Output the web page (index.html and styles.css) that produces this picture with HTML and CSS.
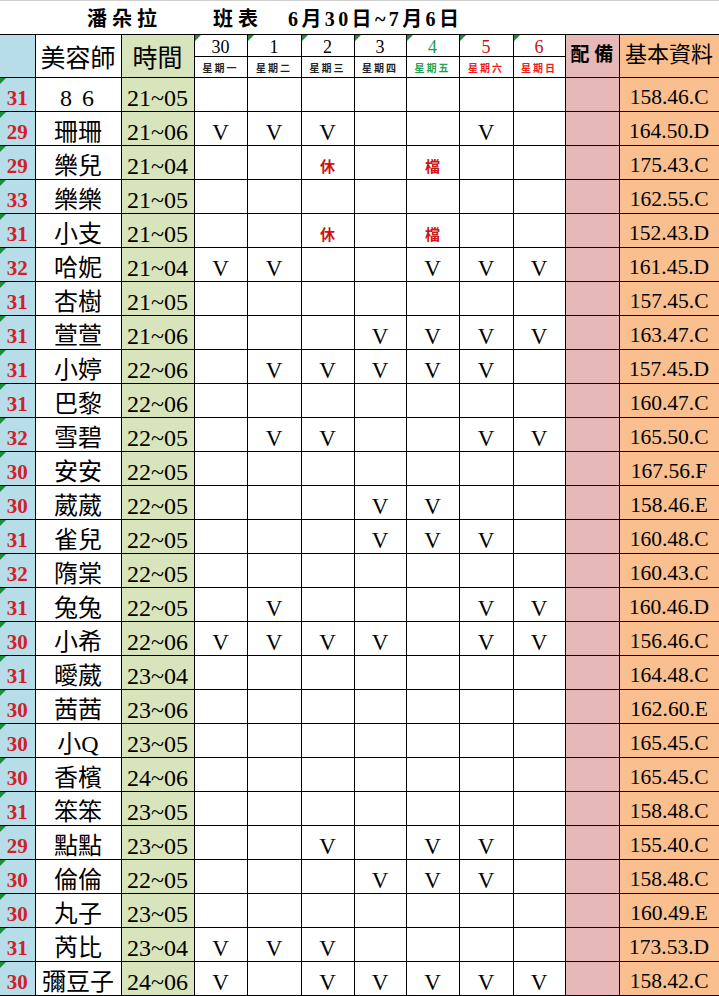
FILE: index.html
```html
<!DOCTYPE html>
<html lang="zh-Hant">
<head>
<meta charset="utf-8">
<title>潘朵拉 班表</title>
<link rel="stylesheet" href="styles.css">
</head>
<body>
<table class="sheet">
<colgroup>
<col class="c-n"><col class="c-nm"><col class="c-t">
<col class="c-d1"><col class="c-d2"><col class="c-d1"><col class="c-d3"><col class="c-d1"><col class="c-d2"><col class="c-d3">
<col class="c-p"><col class="c-o">
</colgroup>
<tr class="title">
<td colspan="12"><div class="title-line"><span class="t1">潘朵拉</span><span class="t2">班表</span><span class="t3">6月30日~7月6日</span></div></td>
</tr>
<tr class="h1">
<td class="n hn" rowspan="2"></td>
<td class="nm hh" rowspan="2">美容師</td>
<td class="t hh" rowspan="2">時間</td>
<td class="dn tri">30</td><td class="dn tri">1</td><td class="dn tri">2</td><td class="dn tri">3</td>
<td class="dn tri g">4</td><td class="dn tri r">5</td><td class="dn tri r">6</td>
<td class="p hp" rowspan="2">配 備</td>
<td class="o ho" rowspan="2">基本資料</td>
</tr>
<tr class="h2">
<td class="wd">星期一</td><td class="wd">星期二</td><td class="wd">星期三</td><td class="wd">星期四</td>
<td class="wd g">星期五</td><td class="wd r">星期六</td><td class="wd r">星期日</td>
</tr>
<tr class="row"><td class="n tri">31</td><td class="nm sp">8 6</td><td class="t">21~05</td><td></td><td></td><td></td><td></td><td></td><td></td><td></td><td class="p"></td><td class="o">158.46.C</td></tr>
<tr class="row"><td class="n tri">29</td><td class="nm">珊珊</td><td class="t">21~06</td><td>V</td><td>V</td><td>V</td><td></td><td></td><td>V</td><td></td><td class="p"></td><td class="o">164.50.D</td></tr>
<tr class="row"><td class="n tri">29</td><td class="nm">樂兒</td><td class="t">21~04</td><td></td><td></td><td class="off">休</td><td></td><td class="off">檔</td><td></td><td></td><td class="p"></td><td class="o">175.43.C</td></tr>
<tr class="row"><td class="n tri">33</td><td class="nm">樂樂</td><td class="t">21~05</td><td></td><td></td><td></td><td></td><td></td><td></td><td></td><td class="p"></td><td class="o">162.55.C</td></tr>
<tr class="row"><td class="n tri">31</td><td class="nm">小支</td><td class="t">21~05</td><td></td><td></td><td class="off">休</td><td></td><td class="off">檔</td><td></td><td></td><td class="p"></td><td class="o">152.43.D</td></tr>
<tr class="row"><td class="n tri">32</td><td class="nm">哈妮</td><td class="t">21~04</td><td>V</td><td>V</td><td></td><td></td><td>V</td><td>V</td><td>V</td><td class="p"></td><td class="o">161.45.D</td></tr>
<tr class="row"><td class="n tri">31</td><td class="nm">杏樹</td><td class="t">21~05</td><td></td><td></td><td></td><td></td><td></td><td></td><td></td><td class="p"></td><td class="o">157.45.C</td></tr>
<tr class="row"><td class="n tri">31</td><td class="nm">萱萱</td><td class="t">21~06</td><td></td><td></td><td></td><td>V</td><td>V</td><td>V</td><td>V</td><td class="p"></td><td class="o">163.47.C</td></tr>
<tr class="row"><td class="n tri">31</td><td class="nm">小婷</td><td class="t">22~06</td><td></td><td>V</td><td>V</td><td>V</td><td>V</td><td>V</td><td></td><td class="p"></td><td class="o">157.45.D</td></tr>
<tr class="row"><td class="n tri">31</td><td class="nm">巴黎</td><td class="t">22~06</td><td></td><td></td><td></td><td></td><td></td><td></td><td></td><td class="p"></td><td class="o">160.47.C</td></tr>
<tr class="row"><td class="n tri">32</td><td class="nm">雪碧</td><td class="t">22~05</td><td></td><td>V</td><td>V</td><td></td><td></td><td>V</td><td>V</td><td class="p"></td><td class="o">165.50.C</td></tr>
<tr class="row"><td class="n tri">30</td><td class="nm">安安</td><td class="t">22~05</td><td></td><td></td><td></td><td></td><td></td><td></td><td></td><td class="p"></td><td class="o">167.56.F</td></tr>
<tr class="row"><td class="n tri">30</td><td class="nm">葳葳</td><td class="t">22~05</td><td></td><td></td><td></td><td>V</td><td>V</td><td></td><td></td><td class="p"></td><td class="o">158.46.E</td></tr>
<tr class="row"><td class="n tri">31</td><td class="nm">雀兒</td><td class="t">22~05</td><td></td><td></td><td></td><td>V</td><td>V</td><td>V</td><td></td><td class="p"></td><td class="o">160.48.C</td></tr>
<tr class="row"><td class="n tri">32</td><td class="nm">隋棠</td><td class="t">22~05</td><td></td><td></td><td></td><td></td><td></td><td></td><td></td><td class="p"></td><td class="o">160.43.C</td></tr>
<tr class="row"><td class="n tri">31</td><td class="nm">兔兔</td><td class="t">22~05</td><td></td><td>V</td><td></td><td></td><td></td><td>V</td><td>V</td><td class="p"></td><td class="o">160.46.D</td></tr>
<tr class="row"><td class="n tri">30</td><td class="nm">小希</td><td class="t">22~06</td><td>V</td><td>V</td><td>V</td><td>V</td><td></td><td>V</td><td>V</td><td class="p"></td><td class="o">156.46.C</td></tr>
<tr class="row"><td class="n tri">31</td><td class="nm">曖葳</td><td class="t">23~04</td><td></td><td></td><td></td><td></td><td></td><td></td><td></td><td class="p"></td><td class="o">164.48.C</td></tr>
<tr class="row"><td class="n tri">30</td><td class="nm">茜茜</td><td class="t">23~06</td><td></td><td></td><td></td><td></td><td></td><td></td><td></td><td class="p"></td><td class="o">162.60.E</td></tr>
<tr class="row"><td class="n tri">30</td><td class="nm">小Q</td><td class="t">23~05</td><td></td><td></td><td></td><td></td><td></td><td></td><td></td><td class="p"></td><td class="o">165.45.C</td></tr>
<tr class="row"><td class="n tri">30</td><td class="nm">香檳</td><td class="t">24~06</td><td></td><td></td><td></td><td></td><td></td><td></td><td></td><td class="p"></td><td class="o">165.45.C</td></tr>
<tr class="row"><td class="n tri">31</td><td class="nm">笨笨</td><td class="t">23~05</td><td></td><td></td><td></td><td></td><td></td><td></td><td></td><td class="p"></td><td class="o">158.48.C</td></tr>
<tr class="row"><td class="n tri">29</td><td class="nm">點點</td><td class="t">23~05</td><td></td><td></td><td>V</td><td></td><td>V</td><td>V</td><td></td><td class="p"></td><td class="o">155.40.C</td></tr>
<tr class="row"><td class="n tri">30</td><td class="nm">倫倫</td><td class="t">22~05</td><td></td><td></td><td></td><td>V</td><td>V</td><td>V</td><td></td><td class="p"></td><td class="o">158.48.C</td></tr>
<tr class="row"><td class="n tri">30</td><td class="nm">丸子</td><td class="t">23~05</td><td></td><td></td><td></td><td></td><td></td><td></td><td></td><td class="p"></td><td class="o">160.49.E</td></tr>
<tr class="row"><td class="n tri">31</td><td class="nm">芮比</td><td class="t">23~04</td><td>V</td><td>V</td><td>V</td><td></td><td></td><td></td><td></td><td class="p"></td><td class="o">173.53.D</td></tr>
<tr class="row"><td class="n tri">30</td><td class="nm">彌豆子</td><td class="t">24~06</td><td>V</td><td></td><td>V</td><td>V</td><td>V</td><td>V</td><td>V</td><td class="p"></td><td class="o">158.42.C</td></tr>
</table>
</body>
</html>
```
FILE: styles.css
```css
html, body {
  margin: 0;
  padding: 0;
  background: #ffffff;
}

.sheet {
  width: 719px;
  border-collapse: collapse;
  table-layout: fixed;
  font-family: "Liberation Serif", "Noto Sans CJK TC", serif;
  color: #000;
}

.c-n { width: 35px; }
.c-nm { width: 86px; }
.c-t { width: 73px; }
.c-d1 { width: 53px; }
.c-d2 { width: 54px; }
.c-d3 { width: 52px; }
.c-p { width: 54px; }
.c-o { width: 100px; }

.sheet td {
  border: 1px solid #000;
  padding: 0;
  text-align: center;
  vertical-align: middle;
  white-space: nowrap;
  overflow: hidden;
  line-height: 1;
  box-sizing: border-box;
  position: relative;
}

.sheet tr > td:first-child {
  border-left: none;
}

/* title row */
.title td {
  height: 34px;
  border-top: 1px solid #cfcfcf;
  text-align: left;
  padding: 0;
}

.title-line {
  display: flex;
  align-items: center;
  font-family: "Liberation Serif", "Noto Sans CJK TC", serif;
  font-weight: bold;
  font-size: 20px;
  padding-top: 2px;
}

.t1 { margin-left: 87px; letter-spacing: 5px; }
.t2 { margin-left: 51px; letter-spacing: 5px; }
.t3 { margin-left: 25px; letter-spacing: 3.4px; }

/* header rows */
.h1 td { height: 22px; }
.h2 td { height: 21px; }

.hh {
  font-size: 25px;
  padding-top: 4px !important;
}

.hp {
  font-size: 19px;
  font-weight: bold;
  padding-bottom: 4px !important;
}

.ho {
  font-size: 22px;
  padding-bottom: 2px !important;
}

.dn {
  font-size: 18px;
  padding-top: 2px !important;
}

.dn.g { color: #1e9a4c; }
.dn.r { color: #c3141c; }

.wd {
  font-family: "Noto Sans CJK TC", sans-serif;
  font-size: 10px;
  font-weight: bold;
  letter-spacing: 2px;
  color: #222;
  padding-top: 2px !important;
}

.wd.g { color: #22a455; }
.wd.r { color: #f01c1c; }

/* data rows */
.row td {
  height: 34px;
  font-size: 23px;
  padding-top: 7px;
}

.row td.n {
  font-size: 21px;
  font-weight: bold;
  color: #d0202a;
}

.row td.nm,
.row td.t {
  font-size: 24px;
}

.row td.sp {
  letter-spacing: 2px;
  text-indent: 0;
}

.row td.o {
  font-size: 21.5px;
}

.row td.off {
  font-family: "Noto Sans CJK TC", sans-serif;
  font-size: 15px;
  font-weight: bold;
  color: #cc1414;
  padding-top: 6px;
}

/* column fills */
.n { background: #b7dde8; }
.t { background: #d8e4bc; }
.p { background: #e6b8b7; }
.o { background: #fabf8f; }

/* spreadsheet comment markers */
.tri::before {
  content: "";
  position: absolute;
  top: 0;
  left: 0;
  width: 0;
  height: 0;
  border-top: 6px solid #1f8a3a;
  border-right: 6px solid transparent;
}
```
